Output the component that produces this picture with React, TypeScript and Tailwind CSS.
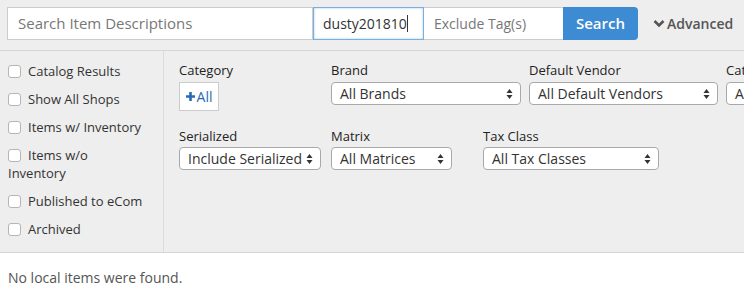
import React from "react";

const font = { fontFamily: '"Open Sans", "Liberation Sans", sans-serif' };

const Arrows: React.FC = () => (
  <svg width="7" height="12" viewBox="0 0 7 12" className="shrink-0">
    <path d="M3.5 1 L6.5 5 L0.5 5 Z" fill="#333" />
    <path d="M3.5 11 L6.5 7 L0.5 7 Z" fill="#333" />
  </svg>
);

const FakeSelect: React.FC<{ text: string; width: string }> = ({ text, width }) => (
  <div
    className={`${width} h-[23px] flex items-center justify-between pl-[8px] pr-[7px] bg-white border border-[#a9a9a9] rounded-[4px] text-[14px] text-[#333] overflow-hidden whitespace-nowrap`}
  >
    <span>{text}</span>
    <Arrows />
  </div>
);

const Check: React.FC<{ children: React.ReactNode }> = ({ children }) => (
  <div className="mb-[10px] text-[13px] leading-[18px] text-[#333]">
    <span className="inline-block w-[13px] h-[13px] align-[-2px] bg-white border border-[#b5b5b5] rounded-[3px] mr-[7px]" />
    {children}
  </div>
);

const App: React.FC = () => {
  return (
    <div className="w-[744px] h-[302px] bg-white overflow-hidden" style={font}>
      {/* Search bar */}
      <div className="h-[51px] bg-[#eeeeee] border-b border-[#d6d6d6] pt-[7px] pl-[7px] flex items-start">
        <div className="w-[306px] h-[33px] bg-white border border-[#cccccc] flex items-center pl-[10px] text-[15px] text-[#777]">
          Search Item Descriptions
        </div>
        <div className="w-[111px] h-[33px] bg-white border border-[#7aaee0] shadow-[inset_0_0_2px_rgba(102,175,233,0.8)] flex items-center pl-[9px] text-[14px] text-[#333]">
          dusty201810
          <span className="inline-block w-px h-[17px] bg-[#333]" />
        </div>
        <div className="w-[139px] h-[33px] bg-white border-y border-[#cccccc] flex items-center pl-[10px] text-[14px] text-[#777]">
          Exclude Tag(s)
        </div>
        <div className="w-[75px] h-[33px] bg-[#3d8bd3] rounded-r-[4px] flex items-center justify-center text-[15px] font-semibold text-white">
          Search
        </div>
        <div className="h-[33px] ml-[15px] flex items-center text-[14px] font-semibold text-[#555]">
          <svg width="12" height="9" viewBox="0 0 12 9" className="mr-[2px]">
            <path d="M1.5 2 L6 6.5 L10.5 2" stroke="#555" strokeWidth="2.6" fill="none" />
          </svg>
          Advanced
        </div>
      </div>

      {/* Filters */}
      <div className="h-[202px] bg-[#eeeeee] border-b border-[#d6d6d6] flex">
        <div className="w-[164px] shrink-0 border-r border-[#dcdcdc] pl-[8px] pt-[11px]">
          <Check>Catalog Results</Check>
          <Check>Show All Shops</Check>
          <Check>Items w/ Inventory</Check>
          <Check>
            Items w/o
            <br />
            Inventory
          </Check>
          <Check>Published to eCom</Check>
          <Check>Archived</Check>
        </div>

        <div className="flex-1 pl-[15px] pt-[10px] overflow-hidden">
          <div className="flex whitespace-nowrap">
            <div className="w-[152px] shrink-0">
              <div className="text-[13px] leading-[18px] text-[#222] mb-[3px]">Category</div>
              <div className="w-[40px] h-[29px] bg-white border border-[#cccccc] flex items-center justify-center gap-[2px] text-[14px] text-[#2a6bb5]">
                <svg width="9" height="9" viewBox="0 0 9 9">
                  <path d="M4.5 0 V9 M0 4.5 H9" stroke="#2a6bb5" strokeWidth="2.6" />
                </svg>
                All
              </div>
            </div>
            <div className="w-[198px] shrink-0">
              <div className="text-[13px] leading-[18px] text-[#222] mb-[3px]">Brand</div>
              <FakeSelect text="All Brands" width="w-[190px]" />
            </div>
            <div className="w-[197px] shrink-0">
              <div className="text-[13px] leading-[18px] text-[#222] mb-[3px]">Default Vendor</div>
              <FakeSelect text="All Default Vendors" width="w-[189px]" />
            </div>
            <div className="w-[190px] shrink-0">
              <div className="text-[13px] leading-[18px] text-[#222] mb-[3px]">Category</div>
              <FakeSelect text="All Categories" width="w-[180px]" />
            </div>
          </div>

          <div className="flex whitespace-nowrap mt-[16px]">
            <div className="w-[152px] shrink-0">
              <div className="text-[13px] leading-[18px] text-[#222] mb-[2px]">Serialized</div>
              <FakeSelect text="Include Serialized" width="w-[142px]" />
            </div>
            <div className="w-[152px] shrink-0">
              <div className="text-[13px] leading-[18px] text-[#222] mb-[2px]">Matrix</div>
              <FakeSelect text="All Matrices" width="w-[121px]" />
            </div>
            <div className="w-[190px] shrink-0">
              <div className="text-[13px] leading-[18px] text-[#222] mb-[2px]">Tax Class</div>
              <FakeSelect text="All Tax Classes" width="w-[176px]" />
            </div>
          </div>
        </div>
      </div>

      {/* Results */}
      <div className="pl-[8px] pt-[15px] text-[14px] leading-[20px] text-[#555]">
        No local items were found.
      </div>
    </div>
  );
};

export default App;
